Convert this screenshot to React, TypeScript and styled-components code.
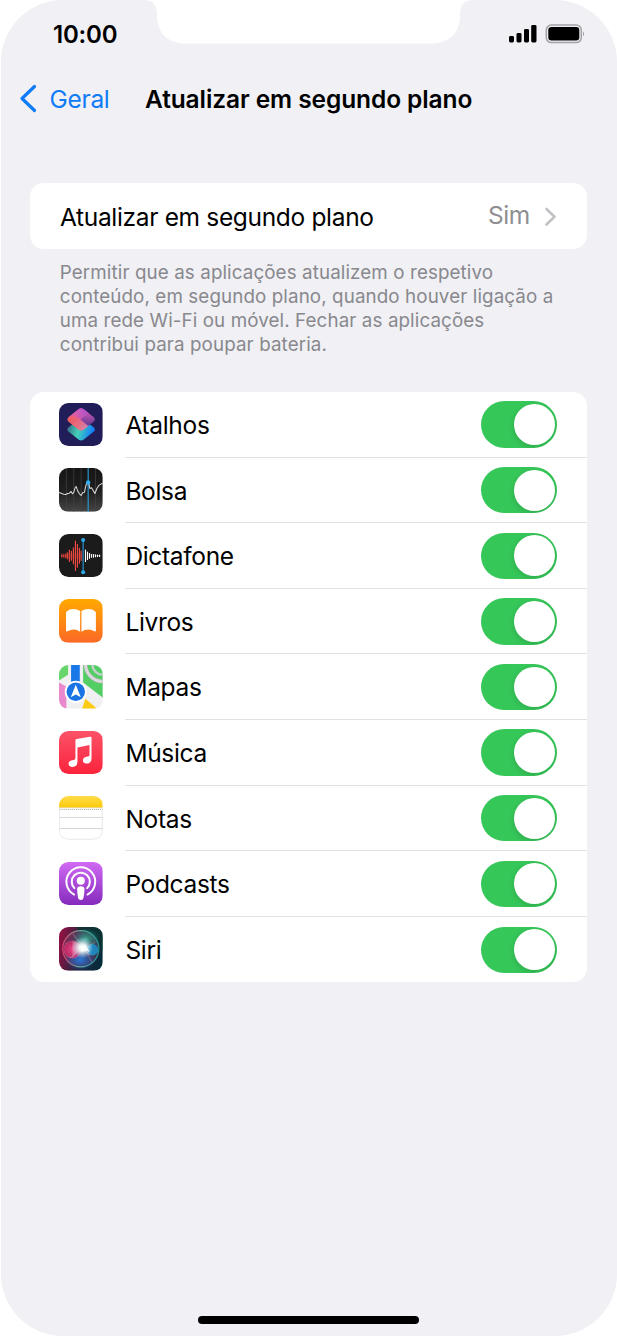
import { FC, ReactNode } from 'react';
import styled, { createGlobalStyle } from 'styled-components';

const GlobalStyle = createGlobalStyle`
  * {
    box-sizing: border-box;
  }
  body {
    margin: 0;
    background: #ffffff;
    font-family: Inter, "Liberation Sans", sans-serif;
    font-feature-settings: "calt" 0;
  }
`;

const Screen = styled.div`
  position: relative;
  display: flex;
  flex-direction: column;
  width: 616px;
  height: 1336px;
  margin-left: 1px;
  padding-bottom: 12px;
  background-color: #f0f0f5;
  border-radius: 62px;
  overflow: hidden;
`;

const Notch = styled.svg`
  position: absolute;
  top: 0;
  left: 142px;
`;

const StatusBar = styled.div`
  display: flex;
  align-items: center;
  justify-content: space-between;
  height: 66px;
  padding: 2px 32px 0 52px;
`;

const Time = styled.span`
  font-size: 24px;
  font-weight: 600;
  letter-spacing: -0.2px;
`;

const NavBar = styled.header`
  display: flex;
  align-items: center;
  height: 65px;
  margin-bottom: 52.4px;
  padding: 0 0 0 17.5px;
`;

const BackLink = styled.a`
  display: flex;
  align-items: center;
  width: 126.5px;
  color: #107bf7;
  font-size: 24.5px;
  letter-spacing: -0.3px;

  svg {
    margin-right: 12px;
  }
`;

const Title = styled.h1`
  margin: 0;
  font-size: 24.5px;
  font-weight: 600;
  letter-spacing: -0.09px;
  white-space: nowrap;
`;

const Card = styled.section`
  margin: 0 30px 0 29px;
  background-color: #ffffff;
  border-radius: 14px;
  overflow: hidden;
`;

const SettingRow = styled.div`
  display: flex;
  align-items: center;
  height: 65.6px;
  padding: 2px 31px 0 30px;
  font-size: 24.5px;
  letter-spacing: -0.33px;
`;

const SettingValue = styled.span`
  margin: -4px 15px 0 auto;
  color: #8e8e92;
`;

const Note = styled.p`
  height: 96px;
  margin: 12px 50px 35px 58.8px;
  color: #88888d;
  font-size: 18.8px;
  line-height: 23.9px;
  letter-spacing: 0.1px;
  white-space: pre;
`;

const AppRow = styled.div`
  display: flex;
  height: 65.6px;
  padding-left: 29.4px;

  &:last-child > div {
    border-bottom: none;
  }
`;

const AppIcon = styled.svg`
  flex: none;
  width: 43.6px;
  height: 43.6px;
  margin: 10.6px 22.4px 0 0;
  border-radius: 9.5px;
`;

const AppInfo = styled.div`
  display: flex;
  flex: 1;
  align-items: center;
  justify-content: space-between;
  padding-right: 29.6px;
  border-bottom: 1.4px solid #e2e2e5;
`;

const AppName = styled.span`
  padding-top: 1.6px;
  font-size: 24.5px;
  letter-spacing: -0.32px;
`;

const Toggle = styled.button<{ $on: boolean }>`
  display: flex;
  justify-content: ${({ $on }) => ($on ? 'flex-end' : 'flex-start')};
  width: 76.4px;
  height: 46.4px;
  margin-top: 0.6px;
  padding: 2.8px;
  border: none;
  border-radius: 24px;
  background-color: ${({ $on }) => ($on ? '#36c759' : '#e9e9eb')};
  overflow: hidden;
`;

const Knob = styled.span`
  width: 40.8px;
  height: 40.8px;
  border-radius: 50%;
  background-color: #ffffff;
  box-shadow: 0 2px 6px rgba(0, 0, 0, 0.15);
`;

const HomeIndicator = styled.div`
  width: 221px;
  height: 8px;
  margin: auto auto 0 197px;
  border-radius: 4px;
  background-color: #000000;
`;

const wave = [
  [8, 2], [14, 2], [20, 4], [25, 9], [31, 17], [37, 13], [43, 24], [49, 44], [55, 34], [61, 22], [66, 14],
];
const waveRight = [
  [79, 17], [85, 11], [91, 7], [97, 4], [103, 4], [109, 3], [115, 2], [121, 2],
];

const ShortcutsIcon = () => (
  <>
    <defs>
      <linearGradient id="scTop" x1="0.1" y1="0.8" x2="0.9" y2="0.3">
        <stop offset="0" stopColor="#ff6257" />
        <stop offset="0.5" stopColor="#e85fa5" />
        <stop offset="1" stopColor="#b055cc" />
      </linearGradient>
      <linearGradient id="scTopRight" x1="0" y1="0" x2="0" y2="1">
        <stop offset="0" stopColor="#e45bc0" />
        <stop offset="1" stopColor="#5a3a8c" />
      </linearGradient>
      <linearGradient id="scBottom" x1="0.1" y1="0.3" x2="0.95" y2="0.5">
        <stop offset="0" stopColor="#36808f" />
        <stop offset="0.4" stopColor="#45d0b8" />
        <stop offset="1" stopColor="#127ff8" />
      </linearGradient>
      <linearGradient id="scFold" x1="0" y1="0.2" x2="1" y2="0.8">
        <stop offset="0" stopColor="#ff6158" />
        <stop offset="0.6" stopColor="#f4697b" />
        <stop offset="1" stopColor="#d99aa8" />
      </linearGradient>
    </defs>
    <rect width="130" height="130" fill="#211d58" />
    <path d="M29 72 58 49Q66 43 74 49L103 72Q111 79 103 86L74 109Q66 115 58 109L29 86Q21 79 29 72Z" fill="url(#scBottom)" />
    <path d="M29 42 58 19Q66 13 74 19L103 42Q111 49 103 56L85 70 62 51 29 42Z" fill="url(#scTopRight)" />
    <path d="M29 42 58 19Q66 13 74 19L88 30 64 49 88 68 74 79Q66 85 58 79L29 56Q21 49 29 42Z" fill="url(#scTop)" opacity="0.8" />
    <path d="M29 43Q43 35 58 45L87 69 74 79Q66 85 58 79L29 56Q22 49 29 43Z" fill="url(#scFold)" opacity="0.7" />
  </>
);

const StocksIcon = () => (
  <>
    <defs>
      <linearGradient id="stBg" x1="0" y1="0" x2="0" y2="1">
        <stop offset="0" stopColor="#151515" />
        <stop offset="0.55" stopColor="#202020" />
        <stop offset="1" stopColor="#454545" />
      </linearGradient>
    </defs>
    <rect width="130" height="130" fill="url(#stBg)" />
    <path d="M22 0V130M44 0V130M66 0V130M109 0V130" stroke="#464646" strokeWidth="2" />
    <path d="M87 0V130" stroke="#289bd5" strokeWidth="3.4" />
    <path d="M0 73 8 76 14 78 20 79 26 76 31 75 36 70 40 77 44 73 48 59 51 55 56 69 61 77 66 82 71 73 76 72 79 57 82 47 89 47 92 61 97 59 102 67 107 76 113 61 119 52 130 45" fill="none" stroke="#dedede" strokeWidth="3" strokeLinejoin="round" />
    <circle cx="87" cy="43" r="6.5" fill="#2eaff0" />
  </>
);

const VoiceMemosIcon = () => (
  <>
    <rect width="130" height="130" fill="#1b1b1c" />
    {wave.map(([x, h]) => (
      <path key={x} d={`M${x} ${65 - h}V${65 + h}`} stroke="#f04a42" strokeWidth="3.4" strokeLinecap="round" />
    ))}
    <rect x="6" y="57" width="63" height="16" fill="#dc4038" opacity="0.25" />
    {waveRight.map(([x, h]) => (
      <path key={x} d={`M${x} ${65 - h}V${65 + h}`} stroke="#ffffff" strokeWidth="3.4" strokeLinecap="round" />
    ))}
    <path d="M72 18V114" stroke="#2495d4" strokeWidth="3.5" />
    <circle cx="72" cy="18" r="6" fill="#2dabe8" />
    <circle cx="72" cy="114" r="6" fill="#2dabe8" />
  </>
);

const BooksIcon = () => (
  <>
    <defs>
      <linearGradient id="bkBg" x1="0" y1="0" x2="0" y2="1">
        <stop offset="0" stopColor="#ffa900" />
        <stop offset="1" stopColor="#fb6925" />
      </linearGradient>
    </defs>
    <rect width="130" height="130" fill="url(#bkBg)" />
    <path d="M63 36Q55 30 43 30 30 30 23 37 21 38 21 41V94Q21 98 25 96 34 91 44 91 54 91 63 98Z" fill="#fff" />
    <path d="M67 36Q75 30 88 30 101 30 108 37 110 38 110 41V94Q110 98 106 96 97 91 87 91 76 91 67 98Z" fill="#fff" />
  </>
);

const MapsIcon = () => (
  <>
    <rect width="130" height="130" fill="#f0f0f2" />
    <path d="M0 0H27V29L0 46Z" fill="#66d56b" />
    <path d="M0 52 22 64V130H0Z" fill="#ea88ce" />
    <path d="M72 0H130V97L72 52Z" fill="#53ce65" />
    <path d="M79 0A52 52 0 0 0 130 49" fill="none" stroke="#a9aaa9" strokeWidth="12" />
    <path d="M79 0A52 52 0 0 0 130 49" fill="none" stroke="#d9d9dc" strokeWidth="9" />
    <path d="M99 0A32 32 0 0 0 130 29" fill="none" stroke="#c8cfca" strokeWidth="7" />
    <path d="M69 130 79 101 113 130Z" fill="#fccb16" />
    <path d="M36 0H62V65H36Z" fill="#1978e7" />
    <circle cx="50" cy="80" r="33" fill="#fff" />
    <circle cx="50" cy="80" r="27.5" fill="#1b74e4" />
    <path d="M50 59 65 96 50 88 35 96Z" fill="#fff" />
  </>
);

const MusicIcon = () => (
  <>
    <defs>
      <linearGradient id="muBg" x1="0" y1="0" x2="0" y2="1">
        <stop offset="0" stopColor="#fb5268" />
        <stop offset="1" stopColor="#fb233b" />
      </linearGradient>
    </defs>
    <rect width="130" height="130" fill="url(#muBg)" />
    <path d="M49 28Q49 25 52 24L92 17Q97 16 97 20V82C97 92 91 97 83 97 67 97 68 79 82 77 89 76 91 75 91 70V42L55 49V91C55 102 49 107 41 107 24 107 25 89 39 87 47 86 49 85 49 79Z" fill="#fff" />
  </>
);

const NotesIcon = () => (
  <>
    <defs>
      <linearGradient id="ntTop" x1="0" y1="0" x2="0" y2="1">
        <stop offset="0" stopColor="#ffdc49" />
        <stop offset="1" stopColor="#fdca0b" />
      </linearGradient>
    </defs>
    <rect width="130" height="130" fill="#fff" />
    <rect width="130" height="34" fill="url(#ntTop)" />
    <path d="M0 35H130" stroke="#d2b04a" strokeWidth="1.5" />
    <path d="M2 40H130" stroke="#aaa" strokeWidth="3" strokeDasharray="3 3" />
    <path d="M0 64H130M0 97H130" stroke="#cecece" strokeWidth="2.5" />
    <path d="M1 34V101Q1 129 29 129H101Q129 129 129 101V34" fill="none" stroke="#dcdcdc" strokeWidth="2" />
  </>
);

const PodcastsIcon = () => (
  <>
    <defs>
      <linearGradient id="pcBg" x1="0" y1="0" x2="0" y2="1">
        <stop offset="0" stopColor="#d16af4" />
        <stop offset="1" stopColor="#832abc" />
      </linearGradient>
    </defs>
    <rect width="130" height="130" fill="url(#pcBg)" />
    <path d="M45 97A43 43 0 1 1 85 97" fill="none" stroke="#fff" strokeWidth="6" strokeLinecap="round" />
    <path d="M46 78A27 27 0 1 1 84 78" fill="none" stroke="#fff" strokeWidth="6" strokeLinecap="round" />
    <circle cx="65" cy="56" r="12" fill="#fff" />
    <path d="M54 80Q54 72 65 72T76 80Q76 94 73 107 72 113 65 113T57 107Q54 94 54 80Z" fill="#fff" />
  </>
);

const SiriIcon = () => (
  <>
    <defs>
      <linearGradient id="siBg" x1="0" y1="0.4" x2="1" y2="0.6">
        <stop offset="0" stopColor="#8e1243" />
        <stop offset="0.45" stopColor="#2b2440" />
        <stop offset="1" stopColor="#062c3c" />
      </linearGradient>
      <linearGradient id="siRing" x1="0" y1="0" x2="1" y2="0">
        <stop offset="0" stopColor="#ed4773" />
        <stop offset="0.45" stopColor="#71b9a0" />
        <stop offset="1" stopColor="#28a3a5" />
      </linearGradient>
      <radialGradient id="siRed">
        <stop offset="0" stopColor="#f04488" />
        <stop offset="0.9" stopColor="#cf2b66" stopOpacity="0.75" />
        <stop offset="1" stopColor="#ff6a9b" stopOpacity="0.8" />
      </radialGradient>
      <radialGradient id="siTeal">
        <stop offset="0" stopColor="#3cb598" stopOpacity="0.9" />
        <stop offset="1" stopColor="#159284" stopOpacity="0" />
      </radialGradient>
      <radialGradient id="siBlue">
        <stop offset="0" stopColor="#2a7de0" stopOpacity="0.95" />
        <stop offset="1" stopColor="#1267ce" stopOpacity="0" />
      </radialGradient>
      <radialGradient id="siGlow">
        <stop offset="0" stopColor="#fff" />
        <stop offset="0.35" stopColor="#f2fffd" stopOpacity="0.9" />
        <stop offset="1" stopColor="#b2eaff" stopOpacity="0" />
      </radialGradient>
    </defs>
    <rect width="130" height="130" fill="url(#siBg)" />
    <path d="M50 0H130V70Z" fill="#07382f" opacity="0.65" />
    <circle cx="65" cy="65" r="53" fill="#7d4872" opacity="0.45" />
    <ellipse cx="80" cy="36" rx="42" ry="32" fill="url(#siTeal)" />
    <ellipse cx="63" cy="98" rx="46" ry="32" fill="url(#siBlue)" />
    <circle cx="40" cy="67" r="26" fill="url(#siRed)" />
    <circle cx="100" cy="68" r="17" fill="#1c93cf" opacity="0.85" />
    <path d="M40 41Q57 44 76 65T100 85Q88 86 76 72T40 93Z" fill="#f3a9c6" opacity="0.4" />
    <path d="M41 20 78 67 99 107M32 92 72 65 108 45" fill="none" stroke="#e8c8dd" strokeWidth="3" opacity="0.3" />
    <circle cx="70" cy="62" r="32" fill="url(#siGlow)" />
    <path d="M62 60 78 52 84 62 92 74 78 70 68 74Z" fill="#fff" opacity="0.8" />
    <circle cx="65" cy="65" r="54" fill="none" stroke="url(#siRing)" strokeWidth="3.5" opacity="0.85" />
  </>
);

type AppItem = {
  name: string;
  icon: ReactNode;
  enabled: boolean;
}

const apps: AppItem[] = [
  { name: 'Atalhos', icon: <ShortcutsIcon />, enabled: true },
  { name: 'Bolsa', icon: <StocksIcon />, enabled: true },
  { name: 'Dictafone', icon: <VoiceMemosIcon />, enabled: true },
  { name: 'Livros', icon: <BooksIcon />, enabled: true },
  { name: 'Mapas', icon: <MapsIcon />, enabled: true },
  { name: 'Música', icon: <MusicIcon />, enabled: true },
  { name: 'Notas', icon: <NotesIcon />, enabled: true },
  { name: 'Podcasts', icon: <PodcastsIcon />, enabled: true },
  { name: 'Siri', icon: <SiriIcon />, enabled: true },
];

const StatusIcons = () => (
  <svg width="77" height="20" viewBox="0 0 77 20">
    <rect x="1" y="12" width="5" height="6.5" rx="1.4" />
    <rect x="8.5" y="9" width="5" height="9.5" rx="1.4" />
    <rect x="16" y="5" width="5" height="13.5" rx="1.4" />
    <rect x="23.2" y="1" width="5.3" height="17.5" rx="1.4" />
    <rect x="38.3" y="1" width="35" height="17.6" rx="5" fill="none" stroke="#a3a3a6" strokeWidth="1.5" />
    <rect x="40.3" y="3" width="31" height="13.5" rx="3.2" />
    <path d="M75 7.2Q77 9.8 75 12.4Z" fill="#9c9ca0" />
  </svg>
);

const AppSetting: FC<{ app: AppItem }> = ({ app }) => {
  return (
    <AppRow>
      <AppIcon viewBox="0 0 130 130">{ app.icon }</AppIcon>
      <AppInfo>
        <AppName>{ app.name }</AppName>
        <Toggle $on={ app.enabled } role="switch" aria-checked={ app.enabled } aria-label={ app.name }>
          <Knob />
        </Toggle>
      </AppInfo>
    </AppRow>
  );
};

const App: FC = () => {
  return (
    <>
      <GlobalStyle />
      <Screen>
        <Notch width="332" height="44" viewBox="143 0 332 44">
          <path d="M143 0C153 0 157 5 157 15C157 33 167 43.5 187 43.5H430C450 43.5 460 33 460 15C460 5 464 0 474 0Z" fill="#fff" />
        </Notch>
        <StatusBar>
          <Time>10:00</Time>
          <StatusIcons />
        </StatusBar>
        <NavBar>
          <BackLink>
            <svg width="19" height="30" viewBox="0 0 19 30">
              <path d="M15.5 2.5 3 14.5 15.5 26.5" fill="none" stroke="currentColor" strokeWidth="3.2" strokeLinecap="round" strokeLinejoin="round" />
            </svg>
            Geral
          </BackLink>
          <Title>Atualizar em segundo plano</Title>
        </NavBar>
        <Card>
          <SettingRow>
            Atualizar em segundo plano
            <SettingValue>Sim</SettingValue>
            <svg width="11" height="20" viewBox="0 0 11 20">
              <path d="M1.5 2 9.5 9.7 1.5 17.5" fill="none" stroke="#c2c2c6" strokeWidth="2.6" strokeLinecap="round" strokeLinejoin="round" />
            </svg>
          </SettingRow>
        </Card>
        <Note>
          {'Permitir que as aplicações atualizem o respetivo\nconteúdo, em segundo plano, quando houver ligação a\numa rede Wi-Fi ou móvel. Fechar as aplicações\ncontribui para poupar bateria.'}
        </Note>
        <Card>
          { apps.map((app) => <AppSetting key={ app.name } app={ app } />) }
        </Card>
        <HomeIndicator />
      </Screen>
    </>
  );
};

export default App;
